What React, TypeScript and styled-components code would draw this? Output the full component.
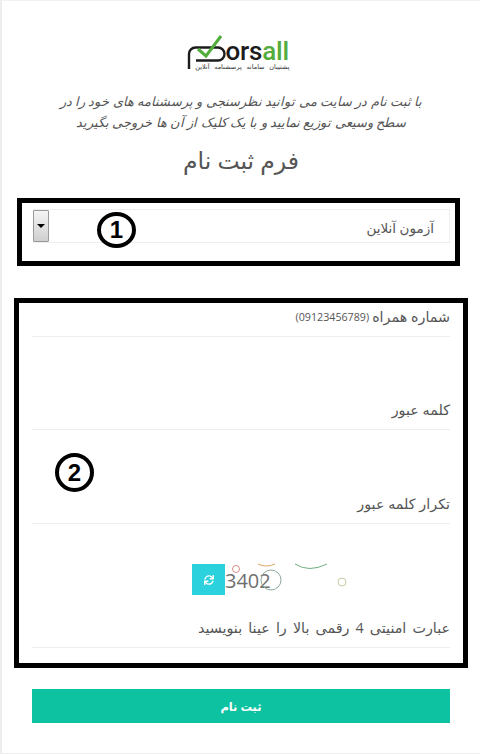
import styled, { createGlobalStyle } from 'styled-components';
import { FaSync } from 'react-icons/fa';

const GlobalStyle = createGlobalStyle`
  html, body {
    margin: 0;
    padding: 0;
    background: #ffffff;
  }
  * {
    box-sizing: border-box;
  }
`;

const Page = styled.div`
  width: 480px;
  height: 754px;
  overflow: hidden;
  background: #ffffff;
  border-left: 2px solid #ededed;
  border-bottom: 1px solid #ededed;
  border-top: 1px solid #f2f2f2;
  font-family: "Open Sans", "DejaVu Sans", sans-serif;
  color: #555555;
  direction: rtl;
  display: flex;
  flex-direction: column;
  align-items: flex-start;
`;

const LogoWrap = styled.div`
  direction: ltr;
  align-self: center;
  margin: 35px 0 0 -6px;
  height: 36px;
  display: flex;
  flex-direction: column;
  width: 103px;
`;

const LogoRow = styled.div`
  display: flex;
  align-items: flex-end;
  height: 26px;
`;

const LogoMark = styled.svg`
  margin-bottom: -9px;
  flex: none;
`;

const LogoWord = styled.span`
  font-family: Roboto, "Liberation Sans", sans-serif;
  font-size: 26px;
  font-weight: 500;
  letter-spacing: -0.2px;
  line-height: 22px;
  color: #1c1c1c;
`;

const LogoGreen = styled.span`
  color: #52ad3c;
`;

const LogoTag = styled.div`
  direction: rtl;
  font-size: 6.5px;
  line-height: 9px;
  word-spacing: 3px;
  color: #333333;
  white-space: nowrap;
  text-align: right;
`;

const Intro = styled.p`
  margin: 19px 0 0;
  align-self: center;
  width: 440px;
  text-align: center;
  font-size: 12.95px;
  line-height: 20.5px;
  font-style: italic;
  color: #555555;
`;

const Title = styled.h1`
  margin: 14px 0 0;
  align-self: center;
  font-size: 23.5px;
  line-height: 28px;
  font-weight: 400;
  color: #555555;
`;

const MarkedBox = styled.section<{ $left: number; $width: number; $height: number; $top: number }>`
  border: 5px solid #000000;
  background: #ffffff;
  flex: none;
  width: ${({ $width }) => $width}px;
  height: ${({ $height }) => $height}px;
  margin-top: ${({ $top }) => $top}px;
  margin-right: ${({ $left, $width }) => 478 - $left - $width}px;
  position: relative;
`;

const SelectRow = styled.div`
  margin: 6px 5px 0 11px;
  height: 34px;
  border-top: 1px solid #eeeeee;
  border-bottom: 1px solid #eeeeee;
  border-right: 1px solid #eeeeee;
  display: flex;
  align-items: center;
  justify-content: space-between;
  padding-right: 15px;
  font-size: 13.5px;
  color: #555555;
`;

const SelectText = styled.span`
  padding-top: 3px;
`;

const SelectArrow = styled.div`
  width: 16px;
  height: 32px;
  border: 1px solid #9a9a9a;
  border-radius: 1px;
  background: linear-gradient(#f5f5f5, #cfcfcf);
  display: flex;
  align-items: center;
  justify-content: center;
  &::after {
    content: '';
    border-left: 4px solid transparent;
    border-right: 4px solid transparent;
    border-top: 4px solid #000000;
  }
`;

const Marker = styled.div<{ $x: number; $y: number; $height: number }>`
  position: absolute;
  left: ${({ $x }) => $x}px;
  top: ${({ $y }) => $y}px;
  width: 39px;
  height: ${({ $height }) => $height}px;
  border: 4px solid #000000;
  border-radius: 50%;
  background: #ffffff;
  display: flex;
  align-items: center;
  justify-content: center;
  font-family: "Liberation Sans", sans-serif;
  font-weight: 700;
  font-size: 24px;
  color: #000000;
`;

const Fields = styled.div`
  padding: 0 13px;
  display: flex;
  flex-direction: column;
`;

const Field = styled.div<{ $height: number; $wordGap?: number }>`
  height: ${({ $height }) => $height}px;
  border-bottom: 1px solid #eeeeee;
  display: flex;
  align-items: flex-end;
  padding-bottom: 9px;
  font-size: 14.3px;
  line-height: 20px;
  color: #555555;
  word-spacing: ${({ $wordGap }) => $wordGap ?? 0}px;
`;

const Hint = styled.small`
  font-size: 10.7px;
  margin-right: 3px;
  color: #555555;
`;

const Captcha = styled.div`
  direction: ltr;
  height: 51px;
  margin-top: 30px;
  position: relative;
  display: flex;
  align-items: center;
  padding-left: 160px;
`;

const RefreshButton = styled.div`
  width: 33px;
  height: 31px;
  background: #2bd2de;
  color: #ffffff;
  display: flex;
  align-items: center;
  justify-content: center;
  font-size: 10px;
`;

const CaptchaCode = styled.span`
  font-size: 20px;
  line-height: 24px;
  padding-top: 2px;
  color: #6f6f6f;
`;

const Noise = styled.svg`
  position: absolute;
  left: 160px;
  top: 0;
`;

const SubmitButton = styled.button`
  flex: none;
  width: 418px;
  height: 34px;
  margin: 21px 30px 0 0;
  border: 0;
  background: #0cc2a0;
  color: #ffffff;
  font-family: inherit;
  font-size: 11.5px;
  font-weight: 700;
`;

const App = () => (
  <>
    <GlobalStyle />
    <Page>
      <LogoWrap>
        <LogoRow>
          <LogoMark width="39" height="36" viewBox="0 0 39 36">
            <path d="M2 34V19a6.500 6.500 0 0 1 6.500-6.500H31a6.500 6.500 0 0 1 0 13H9" fill="none" stroke="#1c1c1c" strokeWidth="2.400" />
            <path d="M11 14l8 7L34 1" fill="none" stroke="#52ad3c" strokeWidth="3" />
          </LogoMark>
          <LogoWord>
            ors<LogoGreen>all</LogoGreen>
          </LogoWord>
        </LogoRow>
        <LogoTag>پشتیبان سامانه پرسشنامه آنلاین</LogoTag>
      </LogoWrap>
      <Intro>
        با ثبت نام در سایت می توانید نظرسنجی و پرسشنامه های خود را در
        <br />
        سطح وسیعی توزیع نمایید و با یک کلیک از آن ها خروجی بگیرید
      </Intro>
      <Title>فرم ثبت نام</Title>
      <MarkedBox $left={15} $width={443} $height={68} $top={24}>
        <SelectRow>
          <SelectText>آزمون آنلاین</SelectText>
          <SelectArrow />
        </SelectRow>
        <Marker $x={75} $y={9} $height={36}>1</Marker>
      </MarkedBox>
      <MarkedBox $left={12} $width={454} $height={370} $top={32}>
        <Fields>
          <Field $height={34}>
            <span>شماره همراه</span>
            <Hint>(09123456789)</Hint>
          </Field>
          <Field $height={93}>کلمه عبور</Field>
          <Field $height={94}>تکرار کلمه عبور</Field>
          <Captcha>
            <RefreshButton>
              <FaSync />
            </RefreshButton>
            <CaptchaCode>3402</CaptchaCode>
            <Noise width="180" height="51" viewBox="0 0 180 51">
              <circle cx="44" cy="15" r="3.500" fill="none" stroke="#d98c8c" />
              <circle cx="79" cy="26" r="10" fill="none" stroke="#8fa89a" />
              <circle cx="150" cy="28" r="4" fill="none" stroke="#c9c9a8" />
              <path d="M66 10q8 4 17 0" fill="none" stroke="#d9a860" />
              <path d="M103 10q14 9 32 0" fill="none" stroke="#6fb07f" />
            </Noise>
          </Captcha>
          <Field $height={43} $wordGap={2.4}>عبارت امنیتی 4 رقمی بالا را عینا بنویسید</Field>
        </Fields>
        <Marker $x={36} $y={150} $height={39}>2</Marker>
      </MarkedBox>
      <SubmitButton>ثبت نام</SubmitButton>
    </Page>
  </>
);

export default App;
